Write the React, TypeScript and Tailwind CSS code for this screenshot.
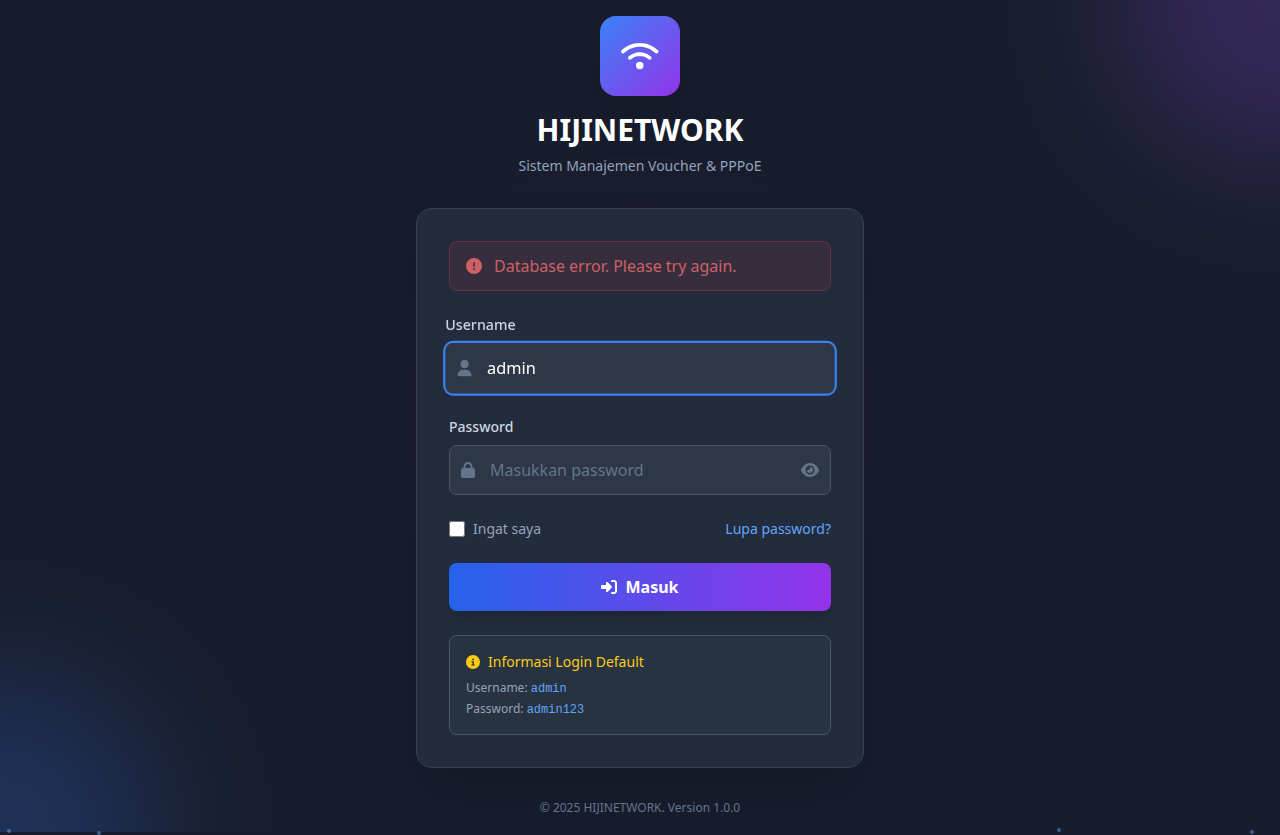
import { useState } from "react";
import type { ReactNode } from "react";
import {
  FaCircleExclamation,
  FaCircleInfo,
  FaEye,
  FaLock,
  FaRightToBracket,
  FaUser,
  FaWifi,
} from "react-icons/fa6";

function Backdrop() {
  return (
    <div className="pointer-events-none absolute inset-x-0 top-0 h-[832px] overflow-hidden">
      <div className="absolute -top-40 -right-40 size-80 rounded-full bg-[#a855f7] opacity-20 blur-[64px]" />
      <div className="absolute -bottom-40 -left-40 size-80 rounded-full bg-[#3b82f6] opacity-20 blur-[64px]" />
      <div className="absolute top-1/2 left-1/2 size-96 -translate-x-1/2 -translate-y-1/2 rounded-full bg-[#ec4899] opacity-[0.04] blur-[64px]" />
    </div>
  );
}

function Particles() {
  return (
    <div className="pointer-events-none absolute inset-0 overflow-hidden">
      <span className="absolute top-[829px] left-[7px] size-1 rounded-full bg-[#60a5fa] opacity-50" />
      <span className="absolute top-[831px] left-[97px] size-1 rounded-full bg-[#60a5fa] opacity-50" />
      <span className="absolute top-[828px] left-[1057px] size-1 rounded-full bg-[#60a5fa] opacity-50" />
      <span className="absolute top-[830px] left-[1250px] size-1 rounded-full bg-[#60a5fa] opacity-50" />
    </div>
  );
}

function Credential({ label, value }: { label: string; value: string }) {
  return (
    <p className="h-[17px] text-xs leading-4 text-[#94a3b8]">
      {label}:{" "}
      <span className="font-['Liberation_Mono',monospace] text-[#60a5fa]">{value}</span>
    </p>
  );
}

function Label({ htmlFor, children }: { htmlFor: string; children: ReactNode }) {
  return (
    <label htmlFor={htmlFor} className="mb-2 block text-sm font-medium text-[#cbd5e1]">
      {children}
    </label>
  );
}

export default function App() {
  const [username, setUsername] = useState("admin");
  const [password, setPassword] = useState("");
  const [visible, setVisible] = useState(false);

  return (
    <div className="relative h-[835px] overflow-hidden bg-[#181d2e] font-['Noto_Sans',sans-serif]">
      <Backdrop />
      <Particles />
      <main className="relative mx-auto w-[448px] pt-4">
        <header className="mb-8 flex flex-col items-center">
          <div className="mb-4 flex size-20 items-center justify-center rounded-2xl bg-linear-to-br/srgb from-[#3b82f6] to-[#9333ea] shadow-2xl">
            <FaWifi className="h-[30px] w-[37.5px] text-white" />
          </div>
          <h1 className="mb-2 text-3xl leading-9 font-bold text-white">HIJINETWORK</h1>
          <p className="text-sm text-[#94a3b8]">Sistem Manajemen Voucher &amp; PPPoE</p>
        </header>

        <section className="rounded-2xl border border-[#364150] bg-[#232c3c] p-8 shadow-2xl">
          <div className="mb-6 flex items-center rounded-lg border border-[#66303d] bg-[#362e3c] px-4 py-3 text-[#ce6066]">
            <FaCircleExclamation className="mr-3 size-4" />
            <span>Database error. Please try again.</span>
          </div>

          <form className="space-y-6" onSubmit={(e) => e.preventDefault()}>
            <div className="scale-[1.02]">
              <Label htmlFor="username">Username</Label>
              <div className="relative">
                <input
                  id="username"
                  value={username}
                  onChange={(e) => setUsername(e.target.value)}
                  className="block h-[50px] w-full rounded-lg border border-transparent bg-[#2d3747] pr-3 pl-10 text-white ring-2 ring-[#3b82f6] outline-none"
                />
                <div className="pointer-events-none absolute inset-y-0 left-0 flex items-center pl-3">
                  <FaUser className="h-4 w-3.5 text-[#64748b]" />
                </div>
              </div>
            </div>

            <div>
              <Label htmlFor="password">Password</Label>
              <div className="relative">
                <input
                  id="password"
                  type={visible ? "text" : "password"}
                  placeholder="Masukkan password"
                  value={password}
                  onChange={(e) => setPassword(e.target.value)}
                  className="block h-[50px] w-full rounded-lg border border-[#475569] bg-[#2d3747] pr-12 pl-10 text-white outline-none placeholder:text-[#64748b]"
                />
                <div className="pointer-events-none absolute inset-y-0 left-0 flex items-center pl-3">
                  <FaLock className="h-4 w-3.5 text-[#64748b]" />
                </div>
                <button
                  type="button"
                  onClick={() => setVisible(!visible)}
                  className="absolute inset-y-0 right-0 flex items-center pr-3 text-[#64748b]"
                >
                  <FaEye className="h-4 w-[18px]" />
                </button>
              </div>
            </div>

            <div className="flex items-center justify-between text-sm">
              <label className="flex items-center text-[#94a3b8]">
                <input type="checkbox" className="mr-2 size-4" />
                Ingat saya
              </label>
              <a href="#" className="text-[#60a5fa]">
                Lupa password?
              </a>
            </div>

            <button
              type="submit"
              className="flex h-12 w-full items-center justify-center rounded-lg bg-linear-to-r/srgb from-[#2563eb] to-[#9333ea] font-bold text-white shadow-lg"
            >
              <FaRightToBracket className="mr-2 size-4" />
              Masuk
            </button>
          </form>

          <div className="mt-6 rounded-lg border border-[#475569] bg-[#283341] p-4">
            <div className="mb-2 flex items-center text-sm text-[#facc15]">
              <FaCircleInfo className="mr-2 size-3.5" />
              <span>Informasi Login Default</span>
            </div>
            <div className="space-y-1">
              <Credential label="Username" value="admin" />
              <Credential label="Password" value="admin123" />
            </div>
          </div>
        </section>

        <footer className="mt-8 text-center text-xs text-[#64748b]">
          © 2025 HIJINETWORK. Version 1.0.0
        </footer>
      </main>
    </div>
  );
}
